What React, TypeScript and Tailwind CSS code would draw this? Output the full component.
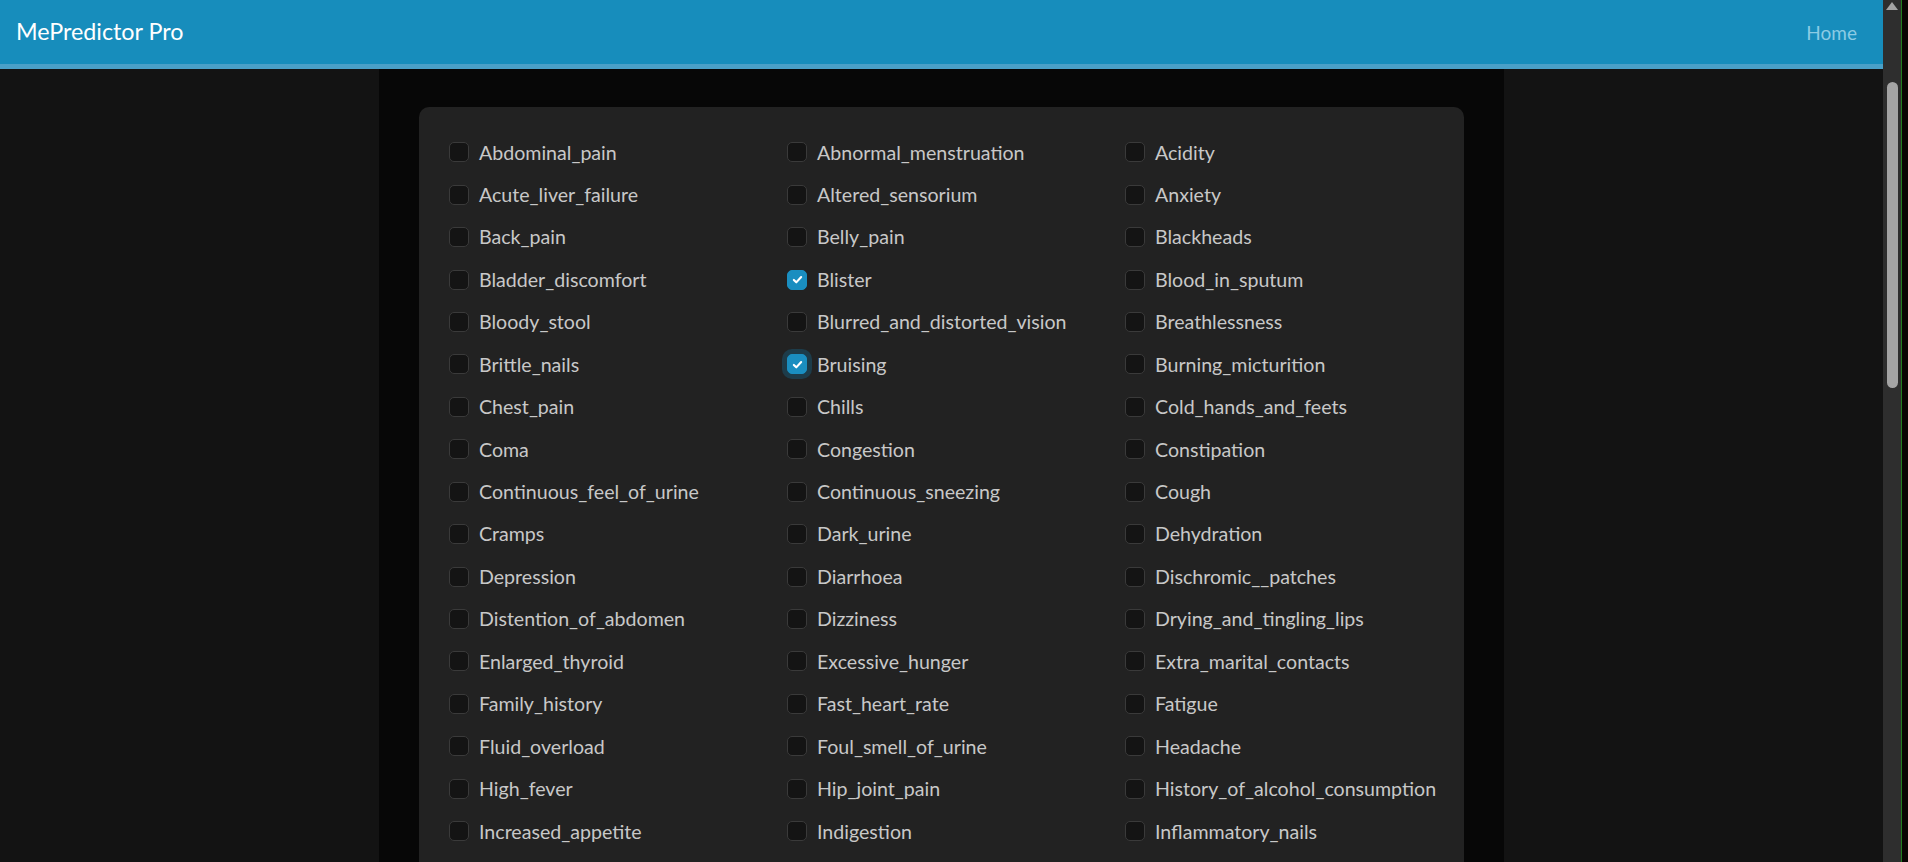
import { Fragment } from "react";

const symptoms = [
    "Abdominal_pain", "Abnormal_menstruation", "Acidity",
    "Acute_liver_failure", "Altered_sensorium", "Anxiety",
    "Back_pain", "Belly_pain", "Blackheads",
    "Bladder_discomfort", "Blister", "Blood_in_sputum",
    "Bloody_stool", "Blurred_and_distorted_vision", "Breathlessness",
    "Brittle_nails", "Bruising", "Burning_micturition",
    "Chest_pain", "Chills", "Cold_hands_and_feets",
    "Coma", "Congestion", "Constipation",
    "Continuous_feel_of_urine", "Continuous_sneezing", "Cough",
    "Cramps", "Dark_urine", "Dehydration",
    "Depression", "Diarrhoea", "Dischromic__patches",
    "Distention_of_abdomen", "Dizziness", "Drying_and_tingling_lips",
    "Enlarged_thyroid", "Excessive_hunger", "Extra_marital_contacts",
    "Family_history", "Fast_heart_rate", "Fatigue",
    "Fluid_overload", "Foul_smell_of_urine", "Headache",
    "High_fever", "Hip_joint_pain", "History_of_alcohol_consumption",
    "Increased_appetite", "Indigestion", "Inflammatory_nails",
];

const checked = ["Blister", "Bruising"];
const focused = "Bruising";

function Check({ on, focus }: { on: boolean; focus: boolean }) {
    return (
        <span
            className={
                "flex h-[20px] w-[20px] shrink-0 items-center justify-center rounded-[5px] border " +
                (on ? "border-[#1a8ec0] bg-[#1a8ec0] " : "border-[#3a3a3a] bg-[#141414] ") +
                (focus ? "shadow-[0_0_0_5px_#1d3c4a]" : "")
            }
        >
            {on && (
                <svg width="13" height="13" viewBox="0 0 16 16">
                    <path d="M3.5 8.5l3 3 6-6.5" fill="none" stroke="#fff" strokeWidth="2.6" strokeLinecap="round" strokeLinejoin="round" />
                </svg>
            )}
        </span>
    );
}

export default function App() {
    return (
        <div className="flex h-[862px] w-full overflow-hidden bg-[#0a0404]" style={{ fontFamily: "'Lato', 'Open Sans', sans-serif" }}>
            <div className="flex min-w-0 flex-1 flex-col">
                {/* navbar */}
                <div className="flex h-[64px] shrink-0 items-center justify-between bg-[#178dbc] pl-[16px] pr-[26px]">
                    <span className="text-[23.3px] leading-none text-white">MePredictor Pro</span>
                    <span className="text-[19px] leading-none text-[#8ccbe4]">Home</span>
                </div>
                <div className="h-[5px] shrink-0 bg-[#4aa0c8]" />

                <div className="flex flex-1 justify-center bg-[#131313]">
                    <div className="w-[1125px] bg-[#070707] px-[40px] pt-[38px]">
                        <div className="min-h-[820px] rounded-[10px] bg-[#222222] pl-[30px] pr-[1px] pt-[24px] pb-6">
                            <div className="grid grid-cols-[338px_338px_338px]">
                                {symptoms.map((s) => (
                                    <Fragment key={s}>
                                        <label className="flex h-[42.44px] items-center gap-[10px] text-[19.6px] text-[#c8c8c8]">
                                            <Check on={checked.includes(s)} focus={s === focused} />
                                            <span>{s}</span>
                                        </label>
                                    </Fragment>
                                ))}
                            </div>
                        </div>
                    </div>
                </div>
            </div>

            {/* scrollbar */}
            <div className="flex w-[18px] shrink-0 flex-col items-center bg-[#2e2e2e]">
                <svg width="14" height="10" viewBox="0 0 14 10" className="mt-[1px]">
                    <path d="M7 1L13 9H1z" fill="#a3a3a3" />
                </svg>
                <div className="mt-[71px] h-[306px] w-[11px] rounded-[6px] bg-[#a4a4a4]" />
            </div>
            <div className="w-px shrink-0 bg-[#1f7d1f]" />
            <div className="w-[6px] shrink-0 bg-[#0a0404]" />
        </div>
    );
}
